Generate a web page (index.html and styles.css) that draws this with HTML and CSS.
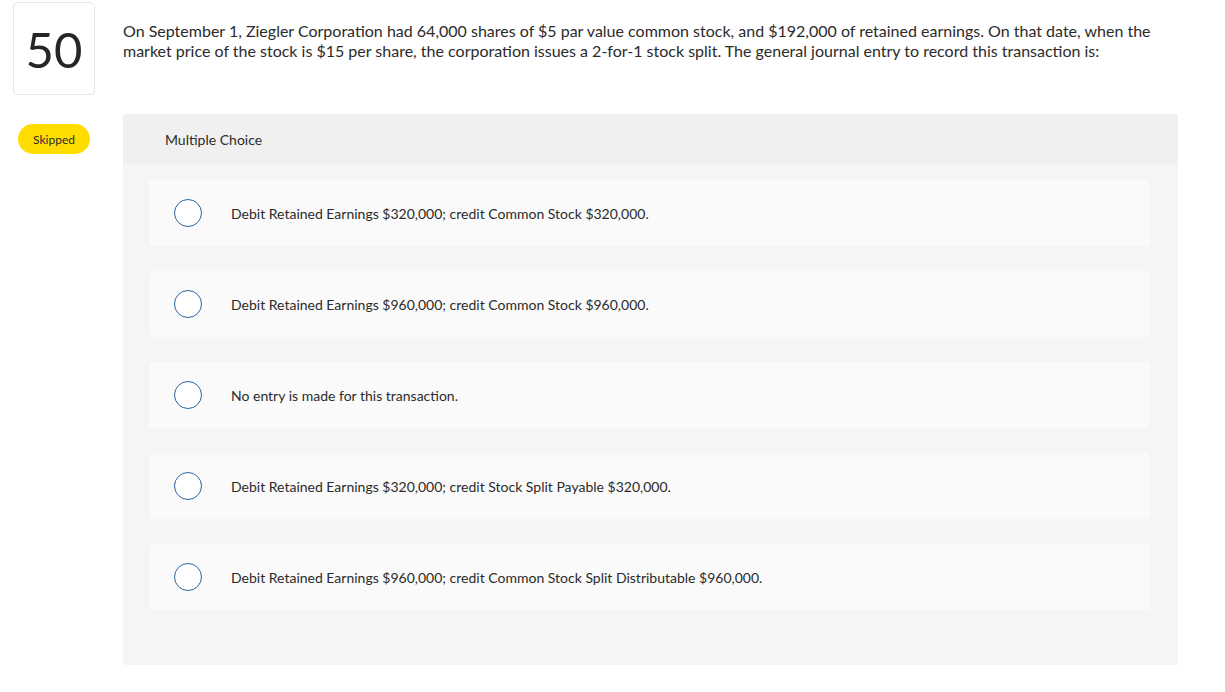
FILE: index.html
```html
<!DOCTYPE html>
<html lang="en">
<head>
    <meta charset="UTF-8">
    <title>Question 50</title>
    <link rel="stylesheet" href="styles.css">
</head>
<body>
    <div class="question">
        <div class="side">
            <div class="number">50</div>
            <div class="badge">Skipped</div>
        </div>
        <div class="main">
            <p class="prompt">On September 1, Ziegler Corporation had 64,000 shares of $5 par value common stock, and $192,000 of retained earnings. On that date, when the market price of the stock is $15 per share, the corporation issues a 2-for-1 stock split. The general journal entry to record this transaction is:</p>

            <div class="panel">
                <div class="panel-head">Multiple Choice</div>
                <div class="choices">
                    <label class="choice"><span class="radio"></span>Debit Retained Earnings $320,000; credit Common Stock $320,000.</label>
                    <label class="choice"><span class="radio"></span>Debit Retained Earnings $960,000; credit Common Stock $960,000.</label>
                    <label class="choice"><span class="radio"></span>No entry is made for this transaction.</label>
                    <label class="choice"><span class="radio"></span>Debit Retained Earnings $320,000; credit Stock Split Payable $320,000.</label>
                    <label class="choice"><span class="radio"></span>Debit Retained Earnings $960,000; credit Common Stock Split Distributable $960,000.</label>
                </div>
            </div>
        </div>
    </div>
</body>
</html>
```

FILE: styles.css
```css
body {
    margin: 0;
    font-family: Lato, 'Open Sans', sans-serif;
    color: #2b2b2b;
    background: #fff;
}
.question {
    display: flex;
    padding: 2px 0 0 13px;
}
.side {
    width: 82px;
    display: flex;
    flex-direction: column;
    align-items: center;
}
.number {
    width: 80px;
    height: 91px;
    border: 1px solid #e6e6e6;
    border-radius: 5px;
    display: flex;
    align-items: center;
    justify-content: center;
    font-size: 49px;
    color: #262626;
}
.badge {
    margin-top: 29px;
    width: 72px;
    height: 30px;
    border-radius: 15px;
    background: #ffdd00;
    font-size: 12px;
    display: flex;
    align-items: center;
    justify-content: center;
}
.main {
    margin-left: 28px;
    width: 1055px;
}
.prompt {
    margin: 19px 0 0;
    font-size: 16px;
    line-height: 20px;
    width: 1040px;
}
.panel {
    margin-top: 53px;
    background: #f5f5f5;
    border-radius: 3px;
    overflow: hidden;
}
.panel-head {
    height: 50px;
    background: #f0f0f0;
    display: flex;
    align-items: center;
    padding-left: 42px;
    font-size: 14px;
}
.choices {
    display: flex;
    flex-direction: column;
    gap: 25px;
    padding: 16px 28px 55px 26px;
}
.choice {
    height: 66px;
    background: #fafafa;
    border-radius: 4px;
    display: flex;
    align-items: center;
    font-size: 14px;
}
.radio {
    width: 26px;
    height: 26px;
    border: 1.5px solid #2a64a0;
    border-radius: 50%;
    background: #fff;
    margin: 0 29px 0 25px;
}
```
